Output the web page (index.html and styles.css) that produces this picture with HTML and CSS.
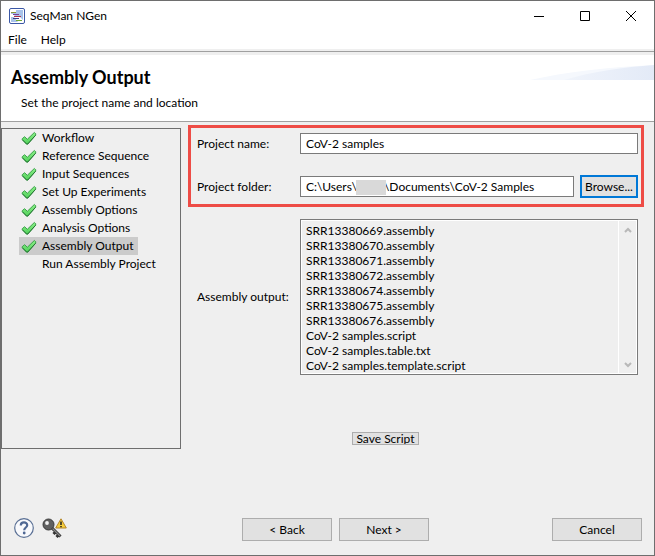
FILE: index.html
```html
<!DOCTYPE html>
<html lang="en">
<head>
<meta charset="utf-8">
<meta name="viewport" content="width=device-width, initial-scale=1">
<title>SeqMan NGen</title>
<link rel="stylesheet" href="styles.css">
</head>
<body>
<svg class="defs" aria-hidden="true">
  <defs>
    <linearGradient id="green" x1="0" y1="0" x2="0" y2="1">
      <stop offset="0" stop-color="#8df08a"/>
      <stop offset="1" stop-color="#4fd058"/>
    </linearGradient>
    <linearGradient id="swoosh-fill" x1="0" y1="0" x2="1" y2="0">
      <stop offset="0" stop-color="#f0f4fb"/>
      <stop offset="1" stop-color="#e3eaf7"/>
    </linearGradient>
    <symbol id="tick" viewBox="0 0 16 16">
      <path d="M1.300 8.600 3.600 6.700 6.300 9.300 13.300 2.500 14.700 3.700V5.200L6.800 14 5.600 14.200 1.300 9.800Z" fill="url(#green)" stroke="#2f9a3e" stroke-width=".9" stroke-linejoin="round"/>
      <path d="M1.500 9.800 5.800 14.200 6.800 14 14.500 5.300" fill="none" stroke="#256f33" stroke-width=".9"/>
    </symbol>
  </defs>
</svg>
<div class="window">
  <header class="titlebar">
    <svg class="app-icon" viewBox="0 0 16 16" aria-hidden="true">
      <rect x="0.5" y="0.5" width="15" height="15" rx="1.5" fill="#fff" stroke="#3b57a6"/>
      <path d="M7 2H14V12L11 9H7L4 6H2V4H7Z" fill="#a9c3ea"/>
      <path d="M2 9H5L9 14H2Z" fill="#a9c3ea"/>
      <path d="M2 4.500H7" stroke="#8c9a3a"/>
      <path d="M4 6.500H10" stroke="#7a3f9a"/>
      <path d="M5 8.500H12" stroke="#b0304a"/>
      <path d="M4 10.500H10" stroke="#3a3f8a"/>
      <path d="M7 12.500H13" stroke="#6fa832"/>
    </svg>
    <span class="title">SeqMan NGen</span>
    <div class="window-buttons">
      <button type="button" aria-label="Minimize"><svg viewBox="0 0 10 10"><path d="M0 5.500H10"/></svg></button>
      <button type="button" aria-label="Maximize"><svg viewBox="0 0 10 10"><path d="M.5 .5H9.500V9.500H.5Z"/></svg></button>
      <button type="button" aria-label="Close"><svg viewBox="0 0 10 10"><path d="M0 0 10 10M10 0 0 10"/></svg></button>
    </div>
  </header>
  <nav class="menubar">
    <button type="button">File</button>
    <button type="button">Help</button>
  </nav>
  <section class="banner">
    <h1>Assembly Output</h1>
    <p>Set the project name and location</p>
    <svg class="swoosh" viewBox="0 0 124 15" aria-hidden="true">
      <path d="M0 15C35 7 80 2 124 0V15Z" fill="#f5f8fd"/>
      <path d="M34 15C60 7 95 2 124 0V15Z" fill="url(#swoosh-fill)"/>
    </svg>
  </section>
  <main class="content">
    <ol class="steps">
      <li><svg><use href="#tick"/></svg>Workflow</li>
      <li><svg><use href="#tick"/></svg>Reference Sequence</li>
      <li><svg><use href="#tick"/></svg>Input Sequences</li>
      <li><svg><use href="#tick"/></svg>Set Up Experiments</li>
      <li><svg><use href="#tick"/></svg>Assembly Options</li>
      <li><svg><use href="#tick"/></svg>Analysis Options</li>
      <li class="current" aria-current="step"><svg><use href="#tick"/></svg>Assembly Output</li>
      <li><svg></svg>Run Assembly Project</li>
    </ol>
    <form class="form">
      <div class="highlight">
        <div class="row">
          <label for="name">Project name:</label>
          <input id="name" type="text" value="CoV-2 samples">
        </div>
        <div class="row">
          <label for="folder">Project folder:</label>
          <div class="folder">
            <input id="folder" type="text" value="C:\Users\&#8195;&#8195;&#8194;&#8201;&#8201;\Documents\CoV-2 Samples">
            <span class="redacted"></span>
          </div>
          <button class="button focused" type="button">Browse...</button>
        </div>
      </div>
      <div class="row output">
        <label for="output">Assembly output:</label>
        <div class="list">
          <textarea id="output" rows="10" readonly>SRR13380669.assembly
SRR13380670.assembly
SRR13380671.assembly
SRR13380672.assembly
SRR13380674.assembly
SRR13380675.assembly
SRR13380676.assembly
CoV-2 samples.script
CoV-2 samples.table.txt
CoV-2 samples.template.script</textarea>
          <div class="scrollbar" aria-hidden="true">
            <svg viewBox="0 0 8 6"><path d="M1 5 4 2 7 5"/></svg>
            <svg viewBox="0 0 8 6"><path d="M1 1 4 4 7 1"/></svg>
          </div>
        </div>
      </div>
      <button class="button save" type="button">Save Script</button>
    </form>
  </main>
  <footer class="footer">
    <div class="tools">
      <button type="button" aria-label="Help">
        <svg width="20" height="20" viewBox="0 0 20 20">
          <circle cx="10" cy="10" r="9.300" fill="#f8f9fc" stroke="#5a7095" stroke-width="1.200"/>
          <path d="M6.800 7.400C6.800 3.300 13.200 3.400 13.200 7.200C13.200 9.500 10.200 9.500 10.200 12.200" fill="none" stroke="#4f6894" stroke-width="2.200"/>
          <circle cx="10.200" cy="15" r="1.400" fill="#4f6894"/>
        </svg>
      </button>
      <button type="button" aria-label="License">
        <svg width="26" height="22" viewBox="0 0 26 22">
          <path d="M9 9 18.500 18.500M13.500 14 11.500 16M16.500 17 14.500 19" fill="none" stroke="#333" stroke-width="3"/>
          <path d="M9 9 18 18" stroke="#888" stroke-width="1.200"/>
          <circle cx="6.500" cy="6.500" r="5.500" fill="#606060" stroke="#383838"/>
          <circle cx="5" cy="5" r="1.900" fill="#f2f2f2"/>
          <path d="M19 .8 24.300 10H13.700Z" fill="#f7cf3c" stroke="#b5862a" stroke-linejoin="round"/>
          <path d="M19 3.500V7M19 8V9.300" stroke="#222" stroke-width="1.500"/>
        </svg>
      </button>
    </div>
    <button class="button" type="button">&lt; Back</button>
    <button class="button" type="button">Next &gt;</button>
    <button class="button cancel" type="button">Cancel</button>
  </footer>
</div>
</body>
</html>
```

FILE: styles.css
```css
* {
  box-sizing: border-box;
}

body {
  margin: 0;
  color: #000;
  font: 12px/16px Lato, "Open Sans", sans-serif;
}

button,
input,
textarea {
  margin: 0;
  padding: 0;
  border: 0;
  border-radius: 0;
  background: none;
  color: inherit;
  font: inherit;
}

.defs {
  position: absolute;
  width: 0;
  height: 0;
}

.window {
  display: flex;
  flex-direction: column;
  min-height: 100vh;
  border: 1px solid #6e6e6e;
  background: #efefef;
}

.titlebar {
  display: flex;
  align-items: center;
  height: 29px;
  padding-left: 8px;
  background: #fff;
}

.app-icon {
  width: 16px;
  height: 16px;
  margin-right: 5px;
}

.window-buttons {
  display: flex;
  margin-left: auto;
}

.window-buttons button {
  display: flex;
  justify-content: center;
  align-items: center;
  width: 46px;
  height: 29px;
}

.window-buttons svg {
  width: 10px;
  height: 10px;
  fill: none;
  stroke: #000;
}

.menubar {
  display: flex;
  gap: 14px;
  height: 19px;
  padding: 0 7px;
  background: #fff;
}

.menubar button {
  height: 20px;
}

.banner {
  position: relative;
  height: 71px;
  margin-top: 2px;
  padding: 13px 10px 0;
  border-top: 1px solid #a0a0a0;
  border-bottom: 1px solid #a0a0a0;
  background: linear-gradient(#efefef 3px, #fff 3px);
}

h1 {
  margin: 0;
  font-size: 18px;
  line-height: 24px;
}

.banner p {
  margin: 6px 10px 0;
}

.swoosh {
  position: absolute;
  top: 13px;
  right: 0;
  width: 124px;
  height: 15px;
}

.content {
  display: flex;
  flex: 1;
  align-items: stretch;
  padding-top: 3px;
}

.steps {
  width: 180px;
  margin: 3px 0 0;
  padding: 0 0 0 17px;
  border: 1px solid #6e6e6e;
  list-style: none;
}

.steps li {
  display: flex;
  align-items: center;
  gap: 5px;
  width: max-content;
  height: 18px;
  padding: 0 5px 0 2px;
}

.steps svg {
  width: 16px;
  height: 16px;
}

.steps .current {
  background: #cbcbcb;
}

.form {
  flex: 1;
  min-width: 0;
  padding: 0 10px 0 7px;
}

.highlight {
  display: grid;
  gap: 21px;
  padding: 5px 3px 6px 6px;
  border: 3px solid #ee4c46;
}

.row {
  display: flex;
  align-items: center;
}

.row label {
  flex: 0 0 103px;
  white-space: nowrap;
}

.row input {
  flex: 1;
  width: 100%;
  min-width: 0;
  height: 21px;
  padding: 0 5px;
  border: 1px solid #7a7a7a;
  background: #fff;
}

.folder {
  position: relative;
  display: flex;
  flex: 1;
  margin-right: 6px;
}

.redacted {
  position: absolute;
  top: 4px;
  left: 56px;
  width: 30px;
  height: 15px;
  background: #d9d9d9;
}

.button {
  width: 90px;
  height: 23px;
  border: 1px solid #adadad;
  background: #e1e1e1;
}

.button.focused {
  width: 58px;
  border: 2px solid #0078d7;
}

.output {
  margin-top: 12px;
  padding: 0 6px 0 9px;
}

.list {
  display: flex;
  flex: 1;
  border: 1px solid #7a7a7a;
  outline: 1px solid #fff;
  outline-offset: -2px;
}

.list textarea {
  flex: 1;
  min-width: 0;
  height: 154px;
  padding: 3px 5px 0;
  overflow: hidden;
  line-height: 15px;
  resize: none;
}

.scrollbar {
  display: flex;
  flex-direction: column;
  justify-content: space-between;
  align-items: center;
  width: 19px;
  padding: 7px 0 6px;
  border-left: 1px solid #fff;
}

.scrollbar svg {
  width: 8px;
  height: 6px;
  fill: none;
  stroke: #b8b8b8;
  stroke-width: 2;
}

.button.save {
  display: block;
  width: 67px;
  height: 13px;
  margin: 57px 0 0 164px;
  overflow: hidden;
  line-height: 11px;
}

.footer {
  display: flex;
  align-items: flex-start;
  gap: 7px;
  padding: 69px 12px 14px;
}

.tools {
  display: flex;
  align-items: flex-start;
  gap: 8px;
  width: 222px;
  padding-left: 1px;
}

.tools button,
.tools svg {
  display: block;
}

.cancel {
  margin-left: auto;
}
```
